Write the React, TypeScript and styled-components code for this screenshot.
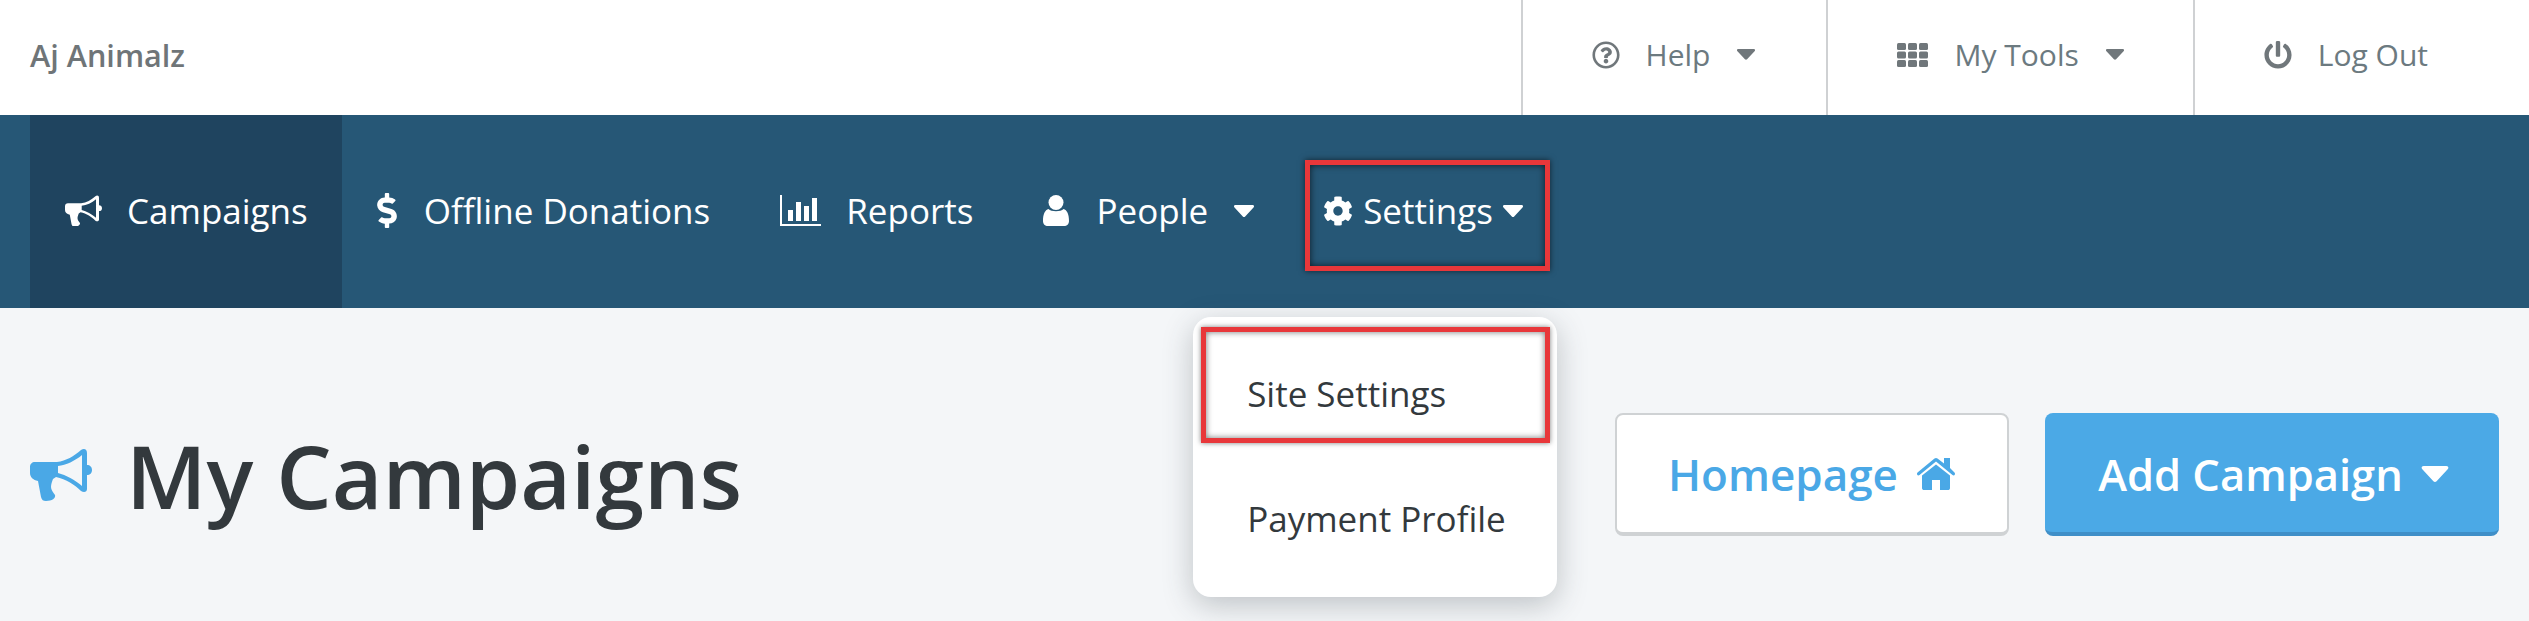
import * as React from "react";
import styled, { createGlobalStyle } from "styled-components";
import { FaCog, FaDollarSign, FaPowerOff, FaRegQuestionCircle } from "react-icons/fa";

const GlobalStyle = createGlobalStyle`
  html, body {
    margin: 0;
    height: 100%;
    background: #f4f6f8;
    font-family: "Open Sans", "Liberation Sans", sans-serif;
    overflow: hidden;
  }
`;

const TopBar = styled.header`
  height: 115px;
  display: flex;
  align-items: stretch;
  justify-content: space-between;
  background: #fff;
  padding-left: 30px;
`;

const AccountName = styled.div`
  align-self: center;
  padding-bottom: 6px;
  font-size: 30.6px;
  font-weight: 600;
  color: #6f7578;
`;

const TopLinks = styled.div`
  display: flex;
`;

const TopLink = styled.a<{ $right?: number }>`
  display: flex;
  align-items: center;
  padding: 0 ${(p) => p.$right ?? 69}px 6px 69px;
  border-left: 2px solid #cfd1d3;
  font-size: 30px;
  color: #6c7a80;
  svg {
    fill: #70777b;
    flex: none;
  }
`;

const TopLabel = styled.span<{ $last?: boolean }>`
  margin: 0 ${(p) => (p.$last ? 0 : 27)}px 0 26px;
`;

const NavBar = styled.nav`
  height: 193px;
  display: flex;
  align-items: stretch;
  background: #265776;
  padding-left: 30px;
`;

const NavItem = styled.a<{ $active?: boolean }>`
  display: flex;
  align-items: center;
  padding: 0 ${(p) => (p.$active ? 34 : 35)}px 2px 35px;
  font-size: 35px;
  color: #fff;
  background: ${(p) => (p.$active ? "#1f445f" : "transparent")};
  svg {
    fill: #fff;
    flex: none;
  }
`;

const NavLabel = styled.span<{ $gap: number; $after?: number }>`
  margin: 0 ${(p) => p.$after ?? 0}px 0 ${(p) => p.$gap}px;
`;

const DollarIcon = styled(FaDollarSign)`
  width: 20px;
  height: 35px;
`;

const SettingsWrap = styled.div`
  position: relative;
  align-self: flex-start;
  margin: 45px 0 0 16px;
`;

const SettingsItem = styled.a`
  box-sizing: border-box;
  width: 245px;
  height: 111px;
  display: flex;
  align-items: center;
  padding: 0 0 10px 13px;
  border: 5px solid #e8373a;
  box-shadow: 0 0 6px rgba(0, 0, 0, 0.6), inset 0 0 7px rgba(0, 0, 0, 0.7);
  font-size: 35px;
  color: #fff;
  svg {
    fill: #fff;
    flex: none;
  }
`;

const SettingsLabel = styled.span`
  margin: 0 10px;
`;

const Dropdown = styled.div`
  position: absolute;
  top: 157px;
  left: -112px;
  z-index: 2;
  box-sizing: border-box;
  width: 364px;
  height: 280px;
  padding-top: 10px;
  background: #fff;
  border-radius: 18px;
  box-shadow: 0 8px 30px rgba(50, 60, 70, 0.28);
`;

const MenuRow = styled.a<{ $marked?: boolean }>`
  box-sizing: border-box;
  display: flex;
  align-items: center;
  height: ${(p) => (p.$marked ? 116 : 150)}px;
  margin-left: 8px;
  width: 349px;
  padding-left: ${(p) => (p.$marked ? 41 : 46)}px;
  font-size: 35px;
  color: #33393d;
  ${(p) =>
    p.$marked &&
    `border: 5px solid #e8373a;
     box-shadow: 0 0 5px rgba(0, 0, 0, 0.5), inset 0 0 6px rgba(0, 0, 0, 0.55);
     padding-top: 16px;`}
`;

const Main = styled.main`
  display: flex;
  justify-content: space-between;
  padding: 105px 30px 0;
`;

const Title = styled.h1`
  display: flex;
  align-items: center;
  margin: 0;
  height: 123px;
  font-size: 87.5px;
  font-weight: 600;
  color: #33393d;
  svg {
    fill: #4aa8e6;
    flex: none;
    margin: 0 34px 0 0;
  }
`;

const Buttons = styled.div`
  display: flex;
  gap: 36px;
`;

const Button = styled.a<{ $primary?: boolean }>`
  box-sizing: border-box;
  display: flex;
  align-items: center;
  justify-content: center;
  height: 123px;
  width: ${(p) => (p.$primary ? 454 : 394)}px;
  padding: ${(p) => (p.$primary ? "3px 0 0 3px" : "0")};
  border-radius: 8px;
  font-size: ${(p) => (p.$primary ? 43.5 : 44)}px;
  font-weight: 600;
  color: ${(p) => (p.$primary ? "#fff" : "#4aa8e6")};
  background: ${(p) => (p.$primary ? "#4ba9e6" : "#fff")};
  border: ${(p) => (p.$primary ? "none" : "2px solid #cfd2d4")};
  border-bottom: 4px solid ${(p) => (p.$primary ? "#3f8fc8" : "#cfd2d4")};
  svg {
    fill: currentColor;
    flex: none;
    margin-left: 18px;
  }
`;

// hollow cone megaphone, the font icon set has none like it
const Megaphone = ({ width }: { width: number }) => (
  <svg width={width} viewBox="0 0 62 53" fillRule="evenodd">
    <path d="M5 14H27C36 13 44 8 51 2C54 0 57 1 57 5V17C60 17 62 19 62 22C62 25 60 27 57 27V41C57 44 54 45 51 43C45 37 36 31 26 29L23 31C22 34 21 36 21 39C21 42 23 44 25 47C26 50 22 53 16 53C13 53 12 52 11 49L8 33C3 32 0 29 0 25V19C0 16 2 14 5 14ZM28 18V25C36 27 45 32 52 38V7C45 13 36 17 28 18Z" />
  </svg>
);

const Caret = ({ width, height }: { width: number; height: number }) => (
  <svg width={width} height={height} viewBox="0 0 20 12">
    <path d="M1.5 0H18.5C20 0 20.5 1.5 19.5 2.5L11.2 11.4C10.5 12.1 9.5 12.1 8.8 11.4L0.5 2.5C-0.5 1.5 0 0 1.5 0Z" />
  </svg>
);

const BarsIcon = () => (
  <svg width="41" height="31" viewBox="0 0 41 31">
    <path d="M0 0H2V29H41V31H0Z" />
    <rect x="8" y="15" width="5" height="11" />
    <rect x="16" y="7" width="5" height="19" />
    <rect x="24" y="11" width="5" height="15" />
    <rect x="32" y="3" width="5" height="23" />
  </svg>
);

const UserIcon = () => (
  <svg width="26" height="31" viewBox="0 0 26 31">
    <ellipse cx="13" cy="7.5" rx="7.5" ry="7.5" />
    <path d="M5.5 14C8 17 18 17 20.5 14C24 15 26 19 26 26C26 29 24 31 21 31H5C2 31 0 29 0 26C0 19 2 15 5.5 14Z" />
  </svg>
);

const GridIcon = () => (
  <svg width="31" height="24" viewBox="0 0 31 24">
    {[0, 8.5, 17].map((y) =>
      [0, 11, 22].map((x) => <rect key={`${x}-${y}`} x={x} y={y} width="9" height="7" rx="1.5" />)
    )}
  </svg>
);

const HomeIcon = () => (
  <svg width="40" height="33" viewBox="0 0 40 33">
    <path d="M6 18.5L20 7.5L34 18.5V31C34 32.5 33 33 32 33H24V23H16V33H8C7 33 6 32.5 6 31Z" />
    <path d="M28 1H34V11L38.5 15.5C40 17 38 19.5 36.5 18L20 4.5L3.5 18C2 19.5 0 17 1.5 15.5L18.5 1.5C19.5 0.7 20.5 0.7 21.5 1.5L28 6.5Z" />
  </svg>
);

export default function App() {
  return (
    <>
      <GlobalStyle />
      <TopBar>
        <AccountName>Aj Animalz</AccountName>
        <TopLinks>
          <TopLink $right={71}>
            <FaRegQuestionCircle size={28} />
            <TopLabel>Help</TopLabel>
            <Caret width={18} height={11} />
          </TopLink>
          <TopLink>
            <GridIcon />
            <TopLabel>My Tools</TopLabel>
            <Caret width={18} height={11} />
          </TopLink>
          <TopLink $right={101}>
            <FaPowerOff size={28} />
            <TopLabel $last>Log Out</TopLabel>
          </TopLink>
        </TopLinks>
      </TopBar>
      <NavBar>
        <NavItem $active>
          <Megaphone width={37} />
          <NavLabel $gap={25}>Campaigns</NavLabel>
        </NavItem>
        <NavItem>
          <DollarIcon />
          <NavLabel $gap={27}>Offline Donations</NavLabel>
        </NavItem>
        <NavItem>
          <BarsIcon />
          <NavLabel $gap={25}>Reports</NavLabel>
        </NavItem>
        <NavItem>
          <UserIcon />
          <NavLabel $gap={27} $after={26}>People</NavLabel>
          <Caret width={20} height={12} />
        </NavItem>
        <SettingsWrap>
          <SettingsItem>
            <FaCog size={30} />
            <SettingsLabel>Settings</SettingsLabel>
            <Caret width={20} height={12} />
          </SettingsItem>
          <Dropdown>
            <MenuRow $marked>Site Settings</MenuRow>
            <MenuRow>Payment Profile</MenuRow>
          </Dropdown>
        </SettingsWrap>
      </NavBar>
      <Main>
        <Title>
          <Megaphone width={62} />
          My Campaigns
        </Title>
        <Buttons>
          <Button>
            Homepage
            <HomeIcon />
          </Button>
          <Button $primary>
            Add Campaign
            <Caret width={28} height={16} />
          </Button>
        </Buttons>
      </Main>
    </>
  );
}
